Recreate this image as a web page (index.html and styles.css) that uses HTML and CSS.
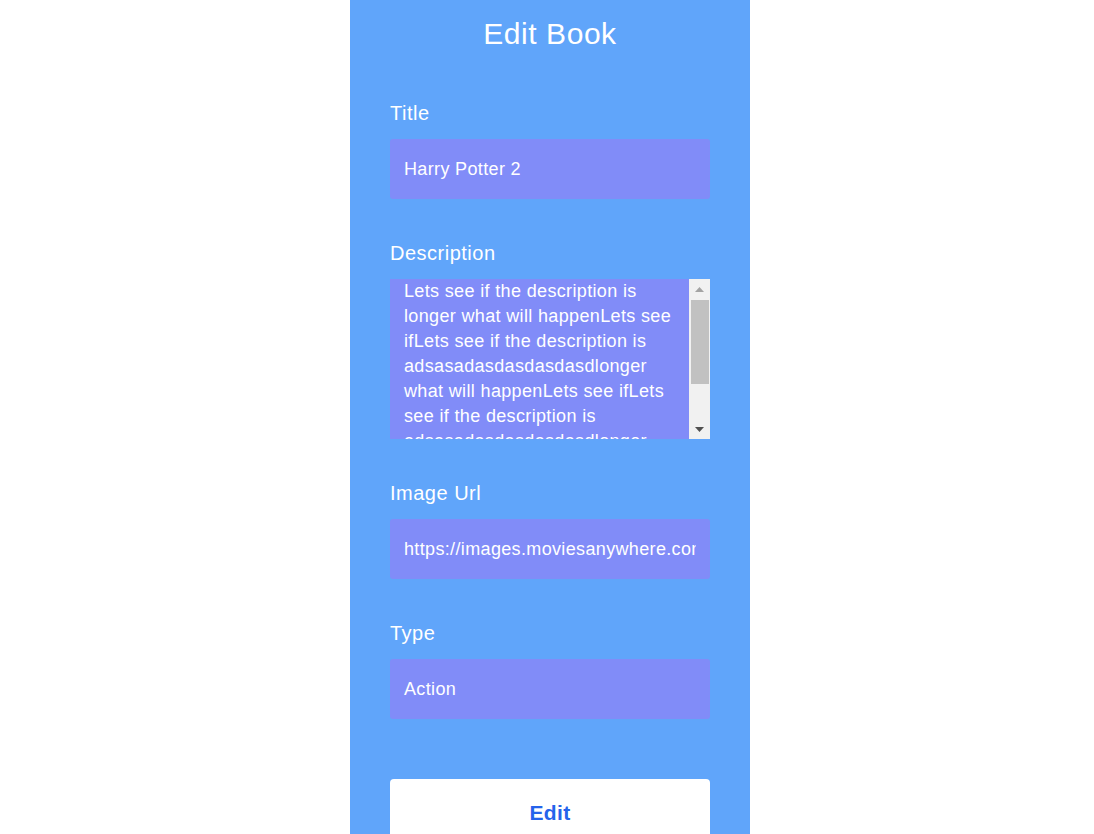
FILE: index.html
```html
<!DOCTYPE html>
<html lang="en">
<head>
<meta charset="utf-8">
<title>Edit Book</title>
<link rel="stylesheet" href="styles.css">
</head>
<body>
<div class="page">
  <main class="panel">
    <h1 class="heading">Edit Book</h1>
    <form class="form">
      <div class="field">
        <label class="label" for="title">Title</label>
        <input class="input" id="title" type="text" value="Harry Potter 2">
      </div>
      <div class="field">
        <label class="label" for="desc">Description</label>
        <div class="textarea-wrap">
          <textarea class="input textarea" id="desc">Lets see if the description is longer what will happenLets see ifLets see if the description is adsasadasdasdasdasdlonger what will happenLets see ifLets see if the description is adsasadasdasdasdasdlonger what will happenLets see if</textarea>
          <div class="scrollbar" aria-hidden="true">
            <div class="sb-btn">
              <svg width="9" height="5" viewBox="0 0 9 5"><polygon points="4.5,0 9,5 0,5" fill="#a3a3a3"/></svg>
            </div>
            <div class="sb-track"><div class="sb-thumb"></div></div>
            <div class="sb-btn">
              <svg width="9" height="5" viewBox="0 0 9 5"><polygon points="0,0 9,0 4.5,5" fill="#505050"/></svg>
            </div>
          </div>
        </div>
      </div>
      <div class="field">
        <label class="label" for="url">Image Url</label>
        <input class="input" id="url" type="text" value="https://images.moviesanywhere.com/143cdb987186a1c8f94d4f18de211216/fdea56fa-2703-47c1-8da8-70fc5382e1ea.jpg">
      </div>
      <div class="field">
        <label class="label" for="type">Type</label>
        <input class="input" id="type" type="text" value="Action">
      </div>
      <button class="submit" type="button">Edit</button>
    </form>
  </main>
</div>
</body>
</html>
```

FILE: styles.css
```css
html, body {
  margin: 0;
  padding: 0;
  background: #ffffff;
  font-family: "Liberation Sans", Arial, sans-serif;
}

.page {
  display: flex;
  justify-content: center;
  padding-left: 6px;
  height: 100vh;
  overflow: hidden;
}

.panel {
  width: 400px;
  box-sizing: border-box;
  background: #60a5fa;
  padding: 16px 40px 40px;
  min-height: 100vh;
}

.heading {
  margin: 0;
  font-size: 30px;
  line-height: 36px;
  font-weight: 400;
  letter-spacing: 0.55px;
  color: #ffffff;
  text-align: center;
}

.form {
  display: flex;
  flex-direction: column;
  gap: 40px;
  margin-top: 47px;
}

.field {
  display: flex;
  flex-direction: column;
  gap: 12px;
}

.label {
  font-size: 20px;
  line-height: 28px;
  letter-spacing: 0.5px;
  color: #ffffff;
}

.input {
  box-sizing: border-box;
  width: 320px;
  height: 60px;
  padding: 0 14px;
  border: none;
  border-radius: 3px;
  background: #818cf8;
  color: #ffffff;
  font-family: "Liberation Sans", Arial, sans-serif;
  font-size: 18px;
  letter-spacing: 0.35px;
  outline: none;
}

.textarea-wrap {
  display: flex;
  width: 320px;
  height: 160px;
  background: #818cf8;
}

.textarea {
  display: block;
  flex: 1;
  width: auto;
  min-width: 0;
  height: 160px;
  padding: 0 14px 14px;
  line-height: 25px;
  resize: none;
  overflow: hidden;
  border-radius: 0;
}

.scrollbar {
  width: 21px;
  flex: none;
  display: flex;
  flex-direction: column;
  background: #f1f1f1;
}

.sb-btn {
  height: 20px;
  flex: none;
  display: flex;
  align-items: center;
  justify-content: center;
}

.sb-btn svg {
  display: block;
}

.sb-track {
  flex: 1;
  display: flex;
  flex-direction: column;
  padding: 1px 1px 0 2px;
}

.sb-thumb {
  height: 84px;
  background: #c1c1c1;
}

.submit {
  margin-top: 20px;
  width: 320px;
  height: 68px;
  border: none;
  border-radius: 4px;
  background: #ffffff;
  color: #2563eb;
  font-family: "Liberation Sans", Arial, sans-serif;
  font-size: 21px;
  font-weight: 700;
  letter-spacing: 0.3px;
  cursor: pointer;
}
```
